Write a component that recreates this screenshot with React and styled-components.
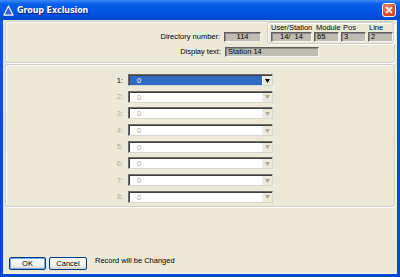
import styled, { createGlobalStyle } from "styled-components"

const GlobalStyle = createGlobalStyle`
    html, body {
        margin: 0;
        padding: 0;
        background: #ECE9D8;
    }
    * {
        box-sizing: border-box;
    }
`

const rows = [1, 2, 3, 4, 5, 6, 7, 8]

const App = () => {
    return (
        <>
            <GlobalStyle />
            <Window>
                <TitleBar>
                    <TitleIcon viewBox="0 0 12 12">
                        <path d="M6 1 L11 11 L1 11 Z" fill="#3a5fd0" stroke="#fff" strokeWidth="1.2" strokeLinejoin="round" />
                    </TitleIcon>
                    <Title>Group Exclusion</Title>
                    <CloseButton>
                        <svg width="8" height="8" viewBox="0 0 8 8">
                            <path d="M1 1 L7 7 M7 1 L1 7" stroke="#fff" strokeWidth="1.6" />
                        </svg>
                    </CloseButton>
                </TitleBar>
                <Body>
                    <TopPanel>
                        <TopRow>
                            <FieldLabel>Directory number:</FieldLabel>
                            <Field $w={37} $center>114</Field>
                            <SubGroup>
                                <SubLabels>
                                    <SubLabel $w={41}>User/Station</SubLabel>
                                    <SubLabel $w={27} $pad={4}>Module</SubLabel>
                                    <SubLabel $w={27} $pad={4}>Pos</SubLabel>
                                    <SubLabel $w={25} $pad={3}>Line</SubLabel>
                                </SubLabels>
                                <SubFields>
                                    <Field $w={41} $center>14/&nbsp;&nbsp;14</Field>
                                    <Field $w={25}>65</Field>
                                    <Field $w={25}>3</Field>
                                    <Field $w={25}>2</Field>
                                </SubFields>
                            </SubGroup>
                        </TopRow>
                        <SecondRow>
                            <FieldLabel>Display text:</FieldLabel>
                            <Field $w={94}>Station 14</Field>
                        </SecondRow>
                    </TopPanel>
                    <ListPanel>
                        {rows.map((n) => (
                            <ComboRow key={n}>
                                <ComboLabel $active={n === 1}>{n}:</ComboLabel>
                                <Combo>
                                    <ComboValue $active={n === 1}>0</ComboValue>
                                    <ComboButton $active={n === 1}>
                                        <svg width="5" height="4" viewBox="0 0 5 4">
                                            <path d="M0 0 H5 L2.5 4 Z" fill={n === 1 ? "#000" : "#ACA899"} />
                                        </svg>
                                    </ComboButton>
                                </Combo>
                            </ComboRow>
                        ))}
                    </ListPanel>
                    <Footer>
                        <Button $default>OK</Button>
                        <Button>Cancel</Button>
                        <Status>Record will be Changed</Status>
                    </Footer>
                </Body>
            </Window>
        </>
    )
}

export default App

const Window = styled.div`
    width: 400px;
    height: 277px;
    display: flex;
    flex-direction: column;
    background: linear-gradient(#0058EE, #0046D5);
    padding: 0 3px 3px 3px;
    font-family: 'Liberation Sans', Arial, sans-serif;
    font-size: 7.5px;
    color: #000;
`

const TitleBar = styled.div`
    height: 20px;
    margin: 0 -3px;
    padding: 0 4px 0 3px;
    display: flex;
    align-items: center;
    background: linear-gradient(#3D8BF7 0%, #0A5FEA 20%, #0054E3 60%, #0047CF 100%);
`

const TitleIcon = styled.svg`
    width: 11px;
    height: 11px;
    margin-right: 3px;
`

const Title = styled.span`
    flex: 1;
    color: #fff;
    font-family: 'DejaVu Sans', sans-serif;
    font-weight: 700;
    font-size: 8px;
    letter-spacing: -0.1px;
    text-shadow: 1px 1px 0 #0A1E7A;
`

const CloseButton = styled.div`
    width: 14px;
    height: 14px;
    border: 1px solid #fff;
    border-radius: 3px;
    background: radial-gradient(circle at 40% 35%, #F09A7C, #E0492A 60%, #C83A1C);
    display: flex;
    align-items: center;
    justify-content: center;
`

const Body = styled.div`
    flex: 1;
    background: #ECE9D8;
    padding: 1px 2px 0 2px;
    display: flex;
    flex-direction: column;
    border-bottom: 1px solid #F8F6EC;
`

const Panel = styled.div`
    border: 1px solid #D0CEBF;
    border-radius: 3px;
    box-shadow: inset 1px 1px 0 #fff, 1px 1px 0 #fff;
`

const TopPanel = styled(Panel)`
    height: 42px;
    display: flex;
    flex-direction: column;
`

const TopRow = styled.div`
    display: flex;
    align-items: flex-end;
`

const SecondRow = styled.div`
    display: flex;
    align-items: center;
    margin-top: 5px;
`

const FieldLabel = styled.span`
    width: 215px;
    text-align: right;
    margin-right: 4px;
    line-height: 10px;
`

const Field = styled.div`
    width: ${(p) => p.$w}px;
    height: 10px;
    line-height: 8px;
    padding: 0 2px;
    text-align: ${(p) => (p.$center ? "center" : "left")};
    background: #BFBCB1;
    border: 1px solid;
    border-color: #5E5E5E #F4F3EE #F4F3EE #5E5E5E;
    box-shadow: inset 1px 1px 0 #8A8A84;
    white-space: nowrap;
`

const SubGroup = styled.div`
    margin-left: 6px;
    margin-bottom: -2px;
    width: 127px;
    height: 22px;
    border: 1px solid #D0CEBF;
    border-radius: 3px;
    box-shadow: inset 1px 1px 0 #fff, 1px 1px 0 #fff;
    padding: 1px 0 0 3px;
    display: flex;
    flex-direction: column;
`

const SubLabels = styled.div`
    display: flex;
    height: 8px;
    line-height: 8px;
`

const SubLabel = styled.span`
    width: ${(p) => p.$w}px;
    padding-left: ${(p) => p.$pad || 0}px;
    white-space: nowrap;
`

const SubFields = styled.div`
    display: flex;
    gap: 2px;
`

const ListPanel = styled(Panel)`
    margin-top: 1px;
    height: 143px;
    padding-top: 9px;
    display: flex;
    flex-direction: column;
    gap: 4.7px;
`

const ComboRow = styled.div`
    display: flex;
    align-items: center;
    height: 12px;
`

const ComboLabel = styled.span`
    width: 117px;
    text-align: right;
    margin-right: 5px;
    color: ${(p) => (p.$active ? "#000" : "#ACA899")};
`

const Combo = styled.div`
    width: 145px;
    height: 12px;
    display: flex;
    border: 1px solid;
    border-color: #6E6D65 #D8D6CC #D8D6CC #6E6D65;
    box-shadow: inset 1px 1px 0 #404040;
    background: #fff;
    padding: 1px 0 0 1px;
`

const ComboValue = styled.div`
    flex: 1;
    line-height: 9px;
    padding-left: 7px;
    background: ${(p) => (p.$active ? "#316AC5" : "#fff")};
    color: ${(p) => (p.$active ? "#fff" : "#ACA899")};
`

const ComboButton = styled.div`
    width: 10px;
    display: flex;
    align-items: center;
    justify-content: center;
    background: #ECE9D8;
    border-left: 1px solid ${(p) => (p.$active ? "#fff" : "#F4F3EE")};
`

const Footer = styled.div`
    flex: 1;
    display: flex;
    align-items: flex-end;
    padding: 0 0 3px 4px;
`

const Button = styled.div`
    width: ${(p) => (p.$default ? 37 : 38)}px;
    height: 13px;
    margin-right: 3px;
    display: flex;
    align-items: center;
    justify-content: center;
    border: 1px solid #003C74;
    border-radius: 2px;
    background: linear-gradient(#FFFFFF, #F0F0EA 70%, #D6D0C5);
    box-shadow: ${(p) => (p.$default ? "inset 0 0 0 1px #7EA7E8" : "none")};
`

const Status = styled.span`
    margin-left: 5px;
    line-height: 13px;
    padding-bottom: 3px;
`
